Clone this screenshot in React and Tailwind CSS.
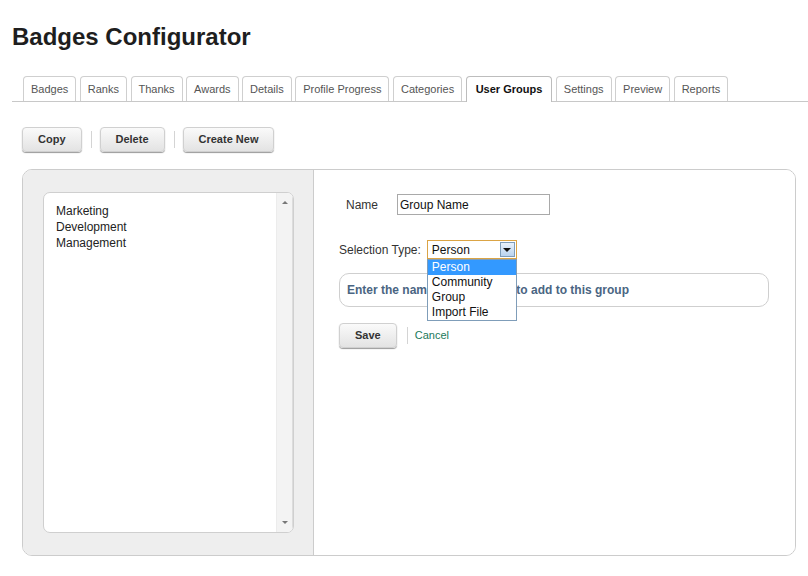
const TABS = [
  "Badges",
  "Ranks",
  "Thanks",
  "Awards",
  "Details",
  "Profile Progress",
  "Categories",
  "User Groups",
  "Settings",
  "Preview",
  "Reports",
];

const ACTIVE_TAB = "User Groups";

const GROUPS = ["Marketing", "Development", "Management"];

const OPTIONS = ["Person", "Community", "Group", "Import File"];

const GrayButton = ({ children }) => (
  <button
    type="button"
    className="h-[25px] rounded-[4px] border border-[#d0d0d0] bg-gradient-to-b from-[#fafafa] to-[#e3e3e3] px-[15px] text-[11px] font-bold text-[#333] shadow-[0_1px_1px_#9a9a9a]"
  >
    {children}
  </button>
);

const Divider = () => <span className="ml-[9px] mr-[8px] h-[17px] w-px bg-[#d4d4d4]" />;

const App = () => {
  return (
    <div className="min-h-[576px] bg-white font-['Liberation_Sans',Arial,sans-serif] text-[#222]">
      <h1 className="pl-3 pt-[23px] text-[24px] font-bold leading-[28px] text-[#1e1e1e]">
        Badges Configurator
      </h1>

      <div className="ml-3 mt-[25px] flex items-end gap-[3.5px] border-b border-[#c8c8c8] pl-[11px]">
        {TABS.map((tab) =>
          tab === ACTIVE_TAB ? (
            <div
              key={tab}
              className="-mb-px flex h-[26px] items-center rounded-t-[4px] border border-b-0 border-[#bdbdbd] bg-white px-[9px] pb-px text-[11px] font-bold text-[#111]"
            >
              {tab}
            </div>
          ) : (
            <div
              key={tab}
              className="flex h-[25px] items-center rounded-t-[4px] border border-b-0 border-[#cfcfcf] bg-white px-[7px] text-[11px] text-[#555]"
            >
              {tab}
            </div>
          ),
        )}
      </div>

      <div className="ml-[22px] mt-[25px] flex items-center">
        <GrayButton>Copy</GrayButton>
        <Divider />
        <GrayButton>Delete</GrayButton>
        <Divider />
        <GrayButton>Create New</GrayButton>
      </div>

      <div className="ml-[22px] mt-[17px] flex h-[387px] w-[774px] overflow-hidden rounded-[10px] border border-[#cccccc]">
        <div className="flex w-[291px] flex-col border-r border-[#cccccc] bg-[#eeeeee] pb-[22px] pl-[20px] pr-[19px] pt-[22px]">
          <div className="flex flex-1 overflow-hidden rounded-[7px] border border-[#cfcfcf] bg-white">
            <ul className="flex-1 pl-[12px] pt-[10px] text-[12px] leading-[16px] text-[#222]">
              {GROUPS.map((group) => (
                <li key={group}>{group}</li>
              ))}
            </ul>
            <div className="flex w-[17px] flex-col items-center justify-between border-l border-r border-l-[#ececec] border-r-[#dcdcdc] bg-[#f3f3f3] py-[8px]">
              <span className="h-0 w-0 border-x-[3px] border-b-[3px] border-x-transparent border-b-[#777]" />
              <span className="h-0 w-0 border-x-[3px] border-t-[3px] border-x-transparent border-t-[#777]" />
            </div>
          </div>
        </div>

        <div className="flex-1 bg-white pl-[25px] pr-[26px] pt-[24px]">
          <div className="flex h-[21px] items-center">
            <span className="ml-[7px] w-[51px] text-[12px] text-[#333]">Name</span>
            <input
              readOnly
              value="Group Name"
              className="h-[21px] w-[153px] border border-[#a9a9a9] px-[2px] text-[12px] text-[#111] outline-none"
            />
          </div>

          <div className="mt-[25px] flex items-center">
            <span className="mr-[6px] text-[12px] text-[#333]">Selection Type:</span>
            <div className="relative">
              <div className="flex h-[19px] w-[90px] items-center justify-between border border-[#dba445] bg-white pl-[4px] pr-px text-[12px] text-[#111]">
                <span>Person</span>
                <span className="flex h-[15px] w-[15px] items-center justify-center border border-[#7f9db9] bg-gradient-to-b from-[#e8f1fb] to-[#b9d3ef]">
                  <span className="h-0 w-0 border-x-[4px] border-t-[4px] border-x-transparent border-t-[#111]" />
                </span>
              </div>
              <ul className="absolute left-0 top-full z-10 w-[90px] border border-[#7f9db9] bg-white text-[12px] leading-[15px] text-[#111]">
                {OPTIONS.map((option, index) => (
                  <li
                    key={option}
                    className={
                      index === 0 ? "bg-[#3399ff] px-[4px] text-white" : "px-[4px]"
                    }
                  >
                    {option}
                  </li>
                ))}
              </ul>
            </div>
          </div>

          <div className="mt-[14px] flex h-[34px] items-center rounded-[10px] border border-[#cfcfcf] px-[7px] text-[12px] font-bold text-[#4a6582]">
            Enter the name of the person to add to this group
          </div>

          <div className="mt-[16px] flex items-center">
            <GrayButton>Save</GrayButton>
            <span className="ml-[10px] mr-[7px] h-[17px] w-px bg-[#d4d4d4]" />
            <a href="#" className="text-[11px] text-[#21795a]">
              Cancel
            </a>
          </div>
        </div>
      </div>
    </div>
  );
};

export default App;
